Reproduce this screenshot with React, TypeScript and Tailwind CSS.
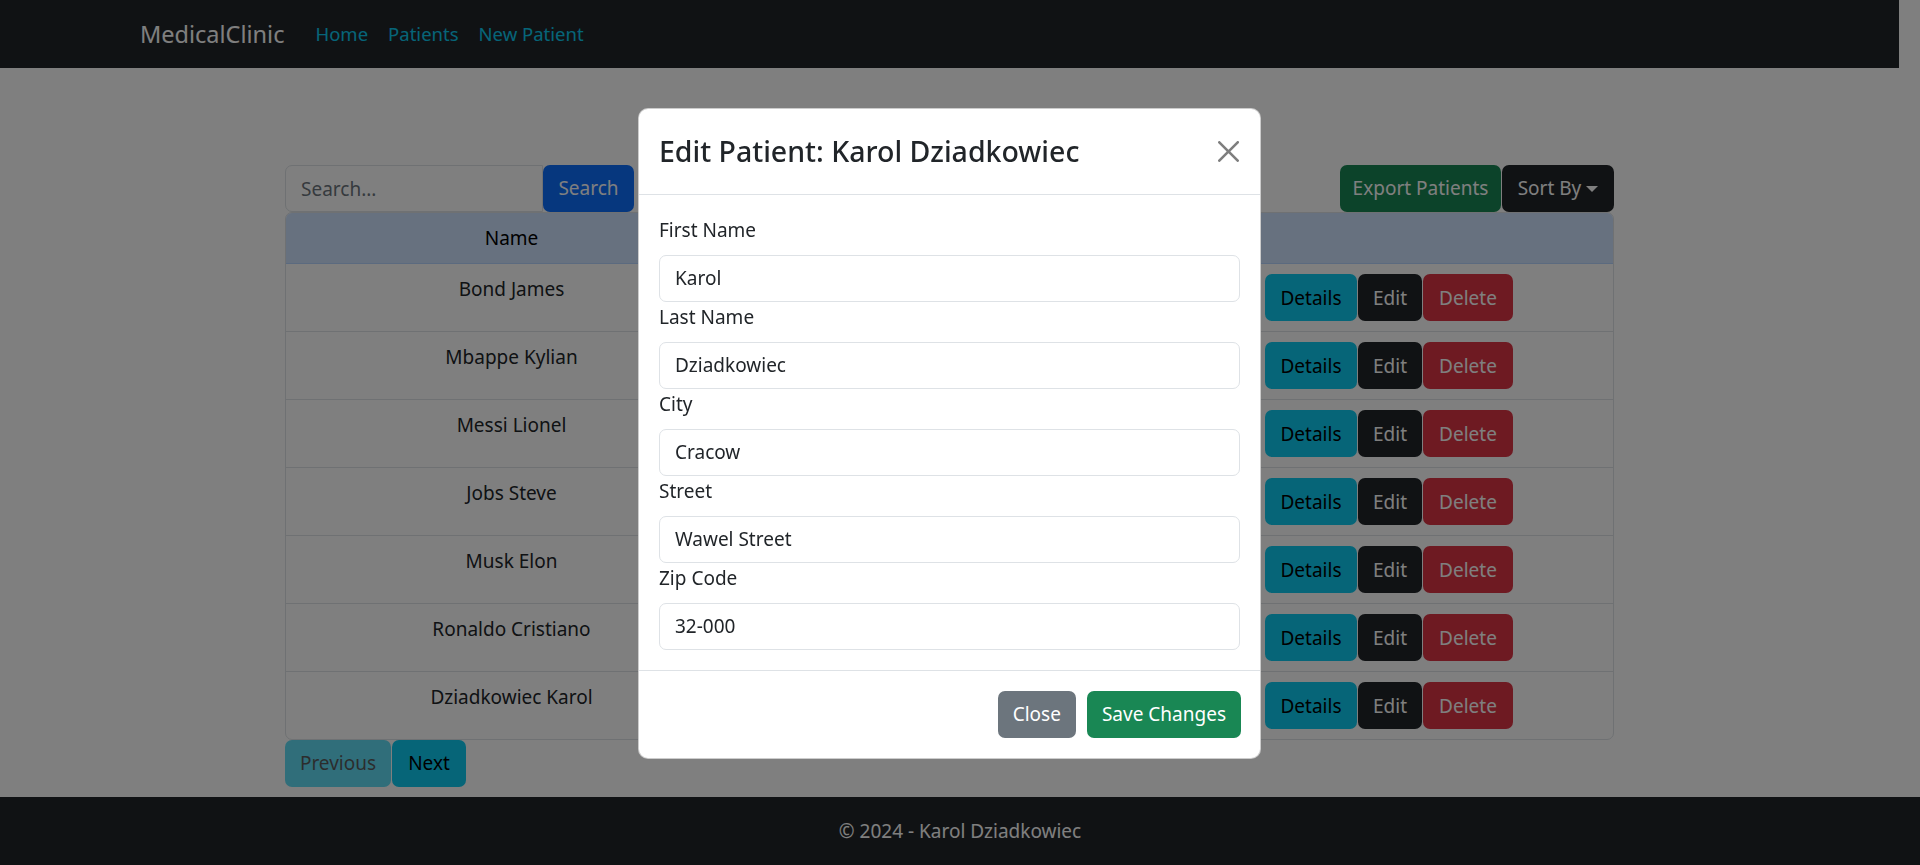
const patients = [
  'Bond James',
  'Mbappe Kylian',
  'Messi Lionel',
  'Jobs Steve',
  'Musk Elon',
  'Ronaldo Cristiano',
  'Dziadkowiec Karol',
];

const fields = [
  { label: 'First Name', value: 'Karol' },
  { label: 'Last Name', value: 'Dziadkowiec' },
  { label: 'City', value: 'Cracow' },
  { label: 'Street', value: 'Wawel Street' },
  { label: 'Zip Code', value: '32-000' },
];

function Navbar() {
  return (
    <nav className="h-[68px] bg-[#212529]">
      <div className="flex h-full items-center pl-[140px]">
        <span className="mr-[31px] text-[23.5px] leading-[36px] text-white">MedicalClinic</span>
        <div className="flex gap-[20px] text-[18.5px] text-[#0dcaf0]">
          <a>Home</a>
          <a>Patients</a>
          <a>New Patient</a>
        </div>
      </div>
    </nav>
  );
}

function PatientTable() {
  return (
    <div className="mx-auto w-[1329px] pt-[97px]">
      <div className="flex items-center justify-between">
        <div className="flex">
          <input
            placeholder="Search..."
            className="h-[47px] w-[258px] rounded-l-[7px] border border-[#dee2e6] px-[15px] text-[19px] outline-none placeholder:text-[#6c757d]"
          />
          <button className="h-[47px] w-[91px] rounded-[7px] bg-[#0d6efd] text-[19px] text-white">Search</button>
        </div>
        <div className="flex gap-px">
          <button className="h-[47px] w-[161px] rounded-[7px] bg-[#198754] text-[19px] text-white">Export Patients</button>
          <button className="flex h-[47px] w-[112px] items-center justify-center rounded-[7px] bg-[#212529] text-[19px] text-white">
            Sort By
            <span className="ml-[5px] inline-block border-x-[6px] border-t-[6px] border-x-transparent border-t-white" />
          </button>
        </div>
      </div>

      <div className="overflow-hidden rounded-[7px] border border-[#dee2e6]">
        <table className="w-full table-fixed border-collapse text-[19px] leading-[30px] text-[#212529]">
          <colgroup>
            <col className="w-[451px]" />
            <col className="w-[518px]" />
            <col />
          </colgroup>
          <thead>
            <tr className="border-b border-[#b6d4fe] bg-[#cfe2ff] text-black">
              <th className="p-[10px] font-normal">Name</th>
              <th className="p-[10px] font-normal" />
              <th className="p-[10px] font-normal" />
            </tr>
          </thead>
          <tbody>
            {patients.map((name, i) => (
              <tr key={name} className={i < patients.length - 1 ? 'border-b border-[#dee2e6]' : ''}>
                <td className="p-[10px] text-center align-top">{name}</td>
                <td className="p-[10px]" />
                <td className="p-[10px] align-top">
                  <div className="flex gap-px">
                    <button className="h-[47px] w-[92px] rounded-[7px] bg-[#0dcaf0] text-black">Details</button>
                    <button className="h-[47px] w-[64px] rounded-[7px] bg-[#212529] text-white">Edit</button>
                    <button className="h-[47px] w-[90px] rounded-[7px] bg-[#dc3545] text-white">Delete</button>
                  </div>
                </td>
              </tr>
            ))}
          </tbody>
        </table>
      </div>

      <div className="flex gap-px text-[19px]">
        <button className="h-[47px] w-[106px] rounded-[7px] bg-[#0dcaf0] text-black opacity-65">Previous</button>
        <button className="h-[47px] w-[74px] rounded-[7px] bg-[#0dcaf0] text-black">Next</button>
      </div>
    </div>
  );
}

function EditModal() {
  return (
    <div className="fixed inset-0 flex items-center justify-center pr-[21px] pt-px">
      <div className="w-[623px] rounded-[10px] border border-black/20 bg-white text-[#212529]">
        <div className="flex items-center justify-between border-b border-[#dee2e6] p-[20px]">
          <h5 className="text-[28.5px] font-medium leading-[45px]">Edit Patient: Karol Dziadkowiec</h5>
          <svg viewBox="0 0 16 16" className="mr-[1px] h-[21px] w-[21px] fill-black opacity-50">
            <path d="M.293.293a1 1 0 0 1 1.414 0L8 6.586 14.293.293a1 1 0 1 1 1.414 1.414L9.414 8l6.293 6.293a1 1 0 0 1-1.414 1.414L8 9.414l-6.293 6.293a1 1 0 0 1-1.414-1.414L6.586 8 .293 1.707a1 1 0 0 1 0-1.414z" />
          </svg>
        </div>
        <div className="p-[20px] text-[19px] leading-[30px]">
          {fields.map((f) => (
            <div key={f.label}>
              <label className="mb-[10px] block">{f.label}</label>
              <input
                defaultValue={f.value}
                className="h-[47px] w-full rounded-[7px] border border-[#dee2e6] px-[15px] text-[19px] outline-none"
              />
            </div>
          ))}
        </div>
        <div className="flex justify-end gap-[11px] border-t border-[#dee2e6] px-[19px] py-[20px] text-[19px]">
          <button className="h-[47px] rounded-[7px] bg-[#6c757d] px-[15px] text-white">Close</button>
          <button className="h-[47px] rounded-[7px] bg-[#198754] px-[15px] text-white">Save Changes</button>
        </div>
      </div>
    </div>
  );
}

export default function App() {
  return (
    <div className="relative min-h-screen bg-white font-['Noto_Sans',sans-serif]">
      <div className="pr-[21px]">
        <Navbar />
        <PatientTable />
      </div>
      <footer className="fixed inset-x-0 bottom-0 flex h-[68px] items-center justify-center bg-[#212529] text-[19px] text-white">
        © 2024 - Karol Dziadkowiec
      </footer>
      <div className="fixed inset-0 bg-black/50" />
      <EditModal />
    </div>
  );
}
